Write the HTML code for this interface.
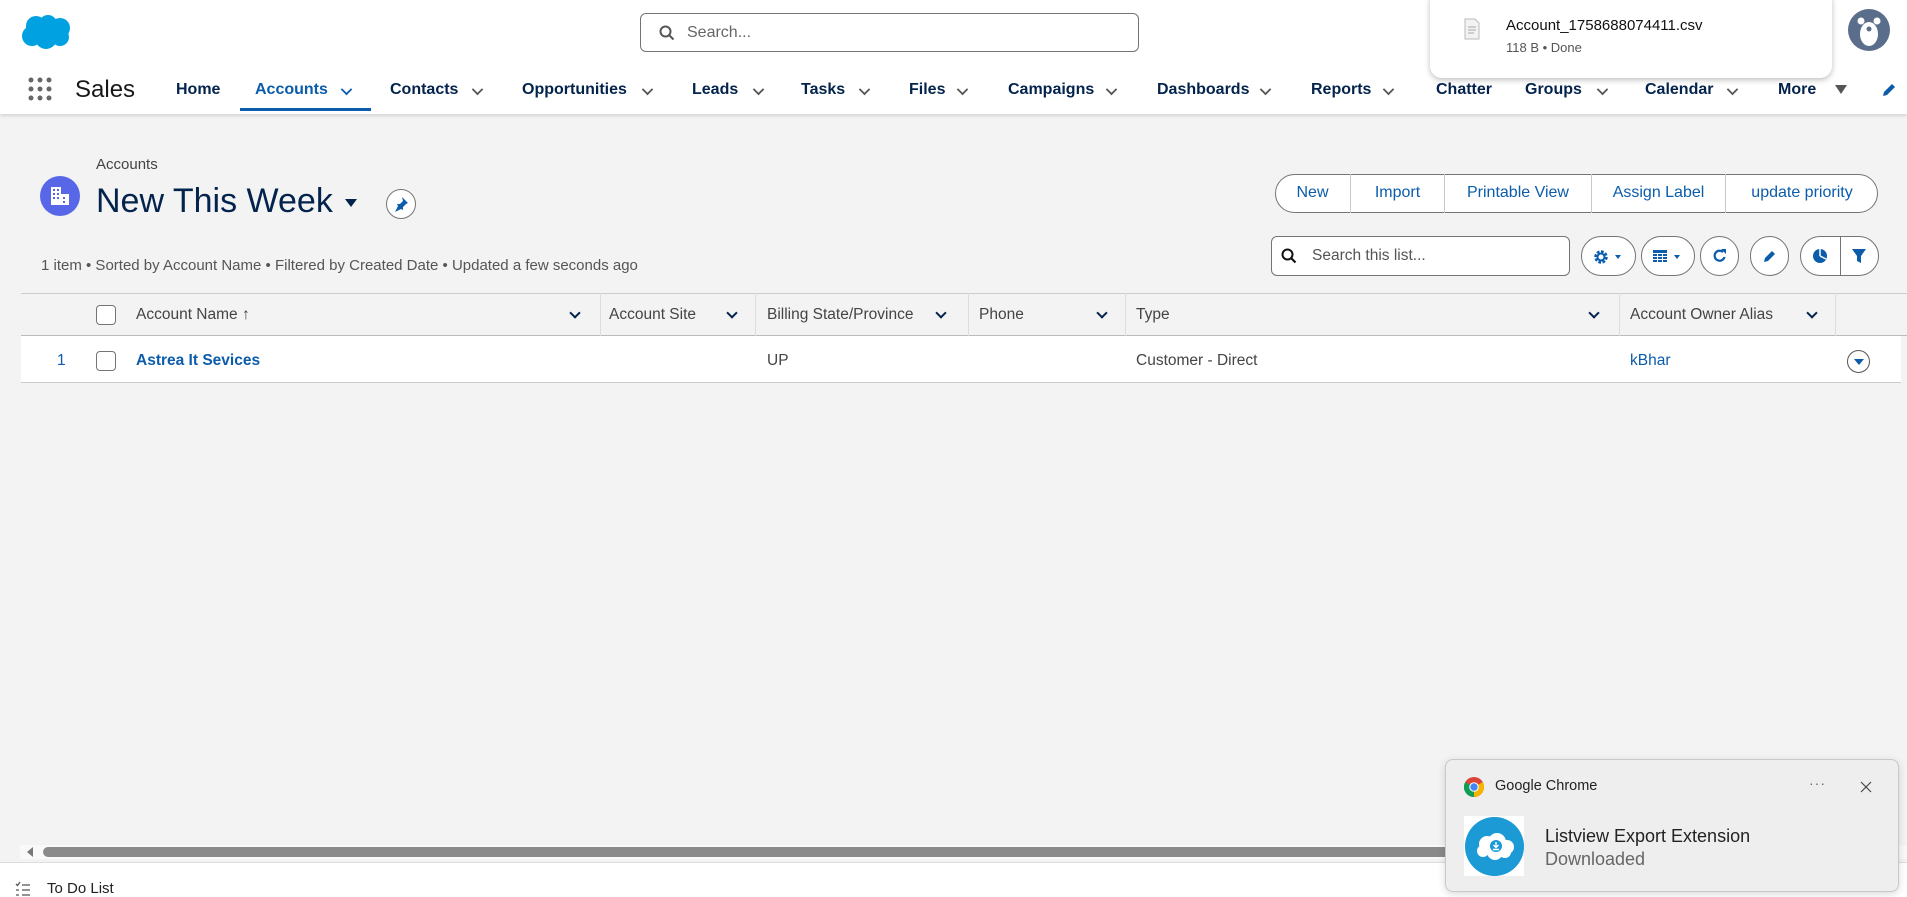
<!DOCTYPE html>
<html><head><meta charset="utf-8"><style>
*{box-sizing:border-box;margin:0;padding:0}
body{width:1907px;height:897px;overflow:hidden;background:#f3f3f3;font-family:"Liberation Sans",sans-serif;position:relative;color:#181818}
.abs{position:absolute}
.hdr{left:0;top:0;width:1907px;height:114px;background:#fff;box-shadow:0 2px 3px rgba(0,0,0,.12)}
.nav{position:absolute;top:81px;font-size:16px;color:#03234d;font-weight:600;white-space:nowrap}
.chev{position:absolute;top:85px;width:9px;height:9px;border-right:2px solid #555;border-bottom:2px solid #555;transform:rotate(45deg) scale(.9,.9)}
.chev2{position:absolute;width:8px;height:8px;border-right:2px solid #03234d;border-bottom:2px solid #03234d;transform:rotate(45deg)}
.btn{position:absolute;top:174px;height:39px;font-size:16px;color:#0b5cab;line-height:37px;text-align:center;border-left:1px solid #c9c9c9}
.ib{position:absolute;top:236px;height:40px;border:1px solid #747474;border-radius:20px;background:#fff}
.th{position:absolute;top:306px;font-size:15.5px;color:#444}
.td{position:absolute;top:352px;font-size:15.5px;color:#444}
.vd{position:absolute;top:293px;width:1px;height:43px;background:#ddd}
</style></head><body>
<div class="abs hdr"></div>
<svg class="abs" style="left:20px;top:14px" width="52" height="36" viewBox="0 0 52 36"><g fill="#00a1e0"><circle cx="16" cy="12" r="10"/><circle cx="28" cy="10" r="9"/><circle cx="40" cy="14" r="10"/><circle cx="12" cy="22" r="10"/><circle cx="26" cy="24" r="11"/><circle cx="40" cy="23" r="9"/></g></svg>
<div class="abs" style="left:640px;top:13px;width:499px;height:39px;border:1px solid #747474;border-radius:6px;background:#fff"></div>
<svg class="abs" style="left:659px;top:25px" width="16" height="16" viewBox="0 0 16 16"><circle cx="6.5" cy="6.5" r="5" fill="none" stroke="#555" stroke-width="2"/><path d="M10 10l4.5 4.5" stroke="#555" stroke-width="2"/></svg>
<div class="abs" style="left:687px;top:24px;font-size:16px;color:#666">Search...</div>
<div class="abs" style="left:1848px;top:9px;width:42px;height:42px;border-radius:50%;background:#5a6d8a"></div>
<svg class="abs" style="left:1848px;top:9px" width="42" height="42" viewBox="0 0 42 42"><circle cx="13" cy="12" r="3.5" fill="#fff"/><circle cx="29" cy="12" r="3.5" fill="#fff"/><ellipse cx="21" cy="25" rx="9" ry="12" fill="#fff"/><circle cx="21" cy="20" r="2.5" fill="#5a6d8a"/></svg>
<svg class="abs" style="left:27px;top:76px" width="26" height="26" viewBox="0 0 26 26" fill="#666"><circle cx="4" cy="4" r="2.5"/><circle cx="13" cy="4" r="2.5"/><circle cx="22" cy="4" r="2.5"/><circle cx="4" cy="13" r="2.5"/><circle cx="13" cy="13" r="2.5"/><circle cx="22" cy="13" r="2.5"/><circle cx="4" cy="22" r="2.5"/><circle cx="13" cy="22" r="2.5"/><circle cx="22" cy="22" r="2.5"/></svg>
<div class="abs" style="left:75px;top:76px;font-size:24px;color:#181818">Sales</div>
<div class="nav" style="left:176px">Home</div>
<div class="nav" style="left:255px;color:#0b5cab">Accounts</div><div class="chev" style="left:342px;border-color:#0b5cab"></div>
<div class="abs" style="left:240px;top:108px;width:131px;height:3px;background:#0b5cab"></div>
<div class="nav" style="left:390px">Contacts</div><div class="chev" style="left:473px"></div>
<div class="nav" style="left:522px">Opportunities</div><div class="chev" style="left:643px"></div>
<div class="nav" style="left:692px">Leads</div><div class="chev" style="left:754px"></div>
<div class="nav" style="left:801px">Tasks</div><div class="chev" style="left:860px"></div>
<div class="nav" style="left:909px">Files</div><div class="chev" style="left:958px"></div>
<div class="nav" style="left:1008px">Campaigns</div><div class="chev" style="left:1107px"></div>
<div class="nav" style="left:1157px">Dashboards</div><div class="chev" style="left:1261px"></div>
<div class="nav" style="left:1311px">Reports</div><div class="chev" style="left:1384px"></div>
<div class="nav" style="left:1436px">Chatter</div>
<div class="nav" style="left:1525px">Groups</div><div class="chev" style="left:1598px"></div>
<div class="nav" style="left:1645px">Calendar</div><div class="chev" style="left:1728px"></div>
<div class="nav" style="left:1778px">More</div>
<div class="abs" style="left:1835px;top:85px;border-left:6px solid transparent;border-right:6px solid transparent;border-top:9px solid #555"></div>
<svg class="abs" style="left:1880px;top:81px" width="18" height="18" viewBox="0 0 18 18"><path d="M3 15l1-4 8-8 3 3-8 8z" fill="#0b5cab"/></svg>
<div class="abs" style="left:1430px;top:-10px;width:402px;height:88px;background:#fff;border-radius:12px;box-shadow:0 2px 6px rgba(0,0,0,.25)"></div>
<svg class="abs" style="left:1464px;top:18px" width="16" height="22" viewBox="0 0 16 22"><path d="M1 1h10l4 4v16H1z" fill="#f2f2f2" stroke="#bbb"/><path d="M4 9h8M4 12h8M4 15h6" stroke="#aaa"/></svg>
<div class="abs" style="left:1506px;top:17px;font-size:15px;color:#111">Account_1758688074411.csv</div>
<div class="abs" style="left:1506px;top:40px;font-size:13px;color:#555">118 B • Done</div>
<div class="abs" style="left:96px;top:156px;font-size:15px;color:#444">Accounts</div>
<div class="abs" style="left:40px;top:176px;width:40px;height:40px;border-radius:50%;background:#5867e8"></div>
<svg class="abs" style="left:49px;top:185px" width="22" height="22" viewBox="0 0 22 22" fill="#fff"><rect x="2" y="2" width="10" height="18"/><rect x="12" y="9" width="8" height="11"/><g fill="#5867e8"><rect x="4" y="4" width="2" height="2"/><rect x="8" y="4" width="2" height="2"/><rect x="4" y="8" width="2" height="2"/><rect x="8" y="8" width="2" height="2"/><rect x="4" y="12" width="2" height="2"/><rect x="8" y="12" width="2" height="2"/><rect x="14" y="12" width="2" height="2"/><rect x="14" y="16" width="2" height="2"/></g></svg>
<div class="abs" style="left:96px;top:182px;font-size:34px;color:#03234d">New This Week</div>
<div class="abs" style="left:345px;top:199px;border-left:6px solid transparent;border-right:6px solid transparent;border-top:8px solid #03234d"></div>
<div class="abs" style="left:386px;top:189px;width:30px;height:30px;border-radius:50%;border:1px solid #747474;background:#fff"></div>
<svg class="abs" style="left:393px;top:196px" width="16" height="16" viewBox="0 0 16 16"><path d="M9 1l6 6-2 1-3 3 0 3-2-1-6 3 3-6-1-2 3 0 3-3z" fill="#0b5cab"/></svg>
<div class="abs" style="left:41px;top:257px;font-size:15px;color:#555">1 item • Sorted by Account Name • Filtered by Created Date • Updated a few seconds ago</div>
<div class="abs" style="left:1275px;top:174px;width:603px;height:39px;border:1px solid #747474;border-radius:20px;background:#fff"></div>
<div class="btn" style="left:1275px;width:75px;border-left:none">New</div>
<div class="btn" style="left:1350px;width:94px">Import</div>
<div class="btn" style="left:1444px;width:147px">Printable View</div>
<div class="btn" style="left:1591px;width:134px">Assign Label</div>
<div class="btn" style="left:1725px;width:153px">update priority</div>
<div class="abs" style="left:1271px;top:236px;width:299px;height:40px;border:1px solid #747474;border-radius:6px;background:#fff"></div>
<svg class="abs" style="left:1281px;top:248px" width="16" height="16" viewBox="0 0 16 16"><circle cx="6.5" cy="6.5" r="5" fill="none" stroke="#111" stroke-width="2"/><path d="M10 10l4.5 4.5" stroke="#111" stroke-width="2.2"/></svg>
<div class="abs" style="left:1312px;top:247px;font-size:15.5px;color:#555">Search this list...</div>
<div class="ib" style="left:1581px;width:55px"></div>
<svg class="abs" style="left:1593px;top:249px" width="16" height="16" viewBox="0 0 16 16"><circle cx="8" cy="8" r="5" fill="none" stroke="#0b5cab" stroke-width="3.5" stroke-dasharray="2.5 1.4"/><circle cx="8" cy="8" r="3.5" fill="none" stroke="#0b5cab" stroke-width="2"/></svg>
<div class="abs" style="left:1615px;top:255px;border-left:3.5px solid transparent;border-right:3.5px solid transparent;border-top:4px solid #0b5cab"></div>
<div class="ib" style="left:1641px;width:54px"></div>
<svg class="abs" style="left:1652px;top:249px" width="16" height="16" viewBox="0 0 16 16" fill="#0b5cab"><rect x="1" y="1" width="14" height="3"/><rect x="1" y="5" width="4" height="2"/><rect x="6" y="5" width="4" height="2"/><rect x="11" y="5" width="4" height="2"/><rect x="1" y="8" width="4" height="2"/><rect x="6" y="8" width="4" height="2"/><rect x="11" y="8" width="4" height="2"/><rect x="1" y="11" width="4" height="2"/><rect x="6" y="11" width="4" height="2"/><rect x="11" y="11" width="4" height="2"/></svg>
<div class="abs" style="left:1674px;top:255px;border-left:3.5px solid transparent;border-right:3.5px solid transparent;border-top:4px solid #0b5cab"></div>
<div class="ib" style="left:1700px;width:39px"></div>
<svg class="abs" style="left:1712px;top:248px" width="16" height="16" viewBox="0 0 16 16"><path d="M12.5 9A5 5 0 1 1 11 4" fill="none" stroke="#0b5cab" stroke-width="2.2"/><path d="M9 1h5v5z" fill="#0b5cab"/></svg>
<div class="ib" style="left:1750px;width:39px"></div>
<svg class="abs" style="left:1762px;top:248px" width="16" height="16" viewBox="0 0 16 16"><path d="M2 14l1-4 7-7 3 3-7 7z" fill="#0b5cab"/></svg>
<div class="ib" style="left:1800px;width:79px"></div>
<div class="abs" style="left:1840px;top:236px;width:1px;height:40px;background:#747474"></div>
<svg class="abs" style="left:1812px;top:248px" width="16" height="16" viewBox="0 0 16 16"><circle cx="8" cy="8" r="7" fill="#0b5cab"/><path d="M8 8V1M8 8l6 3" stroke="#fff" stroke-width="1.5"/></svg>
<svg class="abs" style="left:1851px;top:248px" width="16" height="16" viewBox="0 0 16 16"><path d="M1 1h14l-5 7v7l-4-2V8z" fill="#0b5cab"/></svg>
<div class="abs" style="left:21px;top:293px;width:1886px;height:1px;background:#ccc"></div>
<div class="abs" style="left:21px;top:335px;width:1886px;height:1px;background:#bbb"></div>
<div class="abs" style="left:21px;top:336px;width:1880px;height:47px;background:#fff;border-bottom:1px solid #ccc"></div>
<div class="vd" style="left:600px"></div><div class="vd" style="left:755px"></div><div class="vd" style="left:968px"></div><div class="vd" style="left:1125px"></div><div class="vd" style="left:1619px"></div><div class="vd" style="left:1835px"></div>
<div class="abs" style="left:96px;top:305px;width:20px;height:20px;border:1px solid #747474;border-radius:4px;background:#fff"></div>
<div class="th" style="left:136px">Account Name ↑</div>
<div class="chev2" style="left:571px;top:309px"></div>
<div class="th" style="left:609px">Account Site</div><div class="chev2" style="left:728px;top:309px"></div>
<div class="th" style="left:767px">Billing State/Province</div><div class="chev2" style="left:937px;top:309px"></div>
<div class="th" style="left:979px">Phone</div><div class="chev2" style="left:1098px;top:309px"></div>
<div class="th" style="left:1136px">Type</div><div class="chev2" style="left:1590px;top:309px"></div>
<div class="th" style="left:1630px">Account Owner Alias</div><div class="chev2" style="left:1808px;top:309px"></div>
<div class="td" style="left:57px;color:#0b5cab">1</div>
<div class="abs" style="left:96px;top:351px;width:20px;height:20px;border:1px solid #747474;border-radius:4px;background:#fff"></div>
<div class="td" style="left:136px;color:#0b5cab;font-weight:600">Astrea It Sevices</div>
<div class="td" style="left:767px">UP</div>
<div class="td" style="left:1136px">Customer - Direct</div>
<div class="td" style="left:1630px;color:#0b5cab">kBhar</div>
<div class="abs" style="left:1847px;top:350px;width:23px;height:23px;border:1px solid #555;border-radius:50%;background:#fff"></div>
<div class="abs" style="left:1854px;top:359px;border-left:5px solid transparent;border-right:5px solid transparent;border-top:6px solid #0b5cab"></div>
<div class="abs" style="left:20px;top:845px;width:1887px;height:14px;background:#f9f9f9"></div>
<div class="abs" style="left:27px;top:847px;border-top:5px solid transparent;border-bottom:5px solid transparent;border-right:6px solid #777"></div>
<div class="abs" style="left:43px;top:847px;width:1500px;height:10px;border-radius:5px;background:#8a8a8a"></div>
<div class="abs" style="left:0;top:862px;width:1907px;height:35px;background:#fff;border-top:1px solid #ddd"></div>
<svg class="abs" style="left:15px;top:881px" width="16" height="16" viewBox="0 0 16 16"><path d="M1 3l1.5 1.5L5 1M7 4h8M7 9h8M7 14h8M1 9h3M1 14h3" stroke="#555" stroke-width="1.3" fill="none"/></svg>
<div class="abs" style="left:47px;top:880px;font-size:15px;color:#222">To Do List</div>
<div class="abs" style="left:1445px;top:759px;width:454px;height:133px;background:#eeeeee;border:1px solid #c8c8c8;border-radius:8px;box-shadow:0 2px 8px rgba(0,0,0,.15)"></div>
<svg class="abs" style="left:1464px;top:777px" width="20" height="20" viewBox="0 0 20 20"><circle cx="10" cy="10" r="10" fill="#db4437"/><path d="M10 10L1.3 5A10 10 0 0 0 10 20z" fill="#0f9d58"/><path d="M10 10L10 20A10 10 0 0 0 18.7 5z" fill="#f4b400"/><circle cx="10" cy="10" r="4.8" fill="#fff"/><circle cx="10" cy="10" r="3.7" fill="#4285f4"/></svg>
<div class="abs" style="left:1495px;top:778px;font-size:14.5px;color:#222">Google Chrome</div>
<div class="abs" style="left:1809px;top:775px;font-size:14px;color:#666;letter-spacing:1px">···</div>
<svg class="abs" style="left:1860px;top:781px" width="12" height="12" viewBox="0 0 12 12"><path d="M1 1l10 10M11 1L1 11" stroke="#444" stroke-width="1.2"/></svg>
<div class="abs" style="left:1464px;top:816px;width:60px;height:60px;background:#fff"></div>
<div class="abs" style="left:1465px;top:817px;width:59px;height:59px;border-radius:50%;background:#1b9ad6"></div>
<svg class="abs" style="left:1475px;top:832px" width="40" height="30" viewBox="0 0 40 30"><g fill="#fff"><circle cx="12" cy="12" r="8"/><circle cx="22" cy="10" r="9"/><circle cx="32" cy="15" r="7"/><circle cx="8" cy="19" r="6"/><circle cx="20" cy="20" r="8"/><circle cx="30" cy="20" r="6"/></g><circle cx="21" cy="14" r="6" fill="#1b9ad6"/><path d="M21 10v5M18.5 13l2.5 2.5 2.5-2.5M18 17.5h6" stroke="#fff" stroke-width="1.4" fill="none"/></svg>
<div class="abs" style="left:1545px;top:826px;font-size:18px;color:#222">Listview Export Extension</div>
<div class="abs" style="left:1545px;top:849px;font-size:18px;color:#666">Downloaded</div>
</body></html>
